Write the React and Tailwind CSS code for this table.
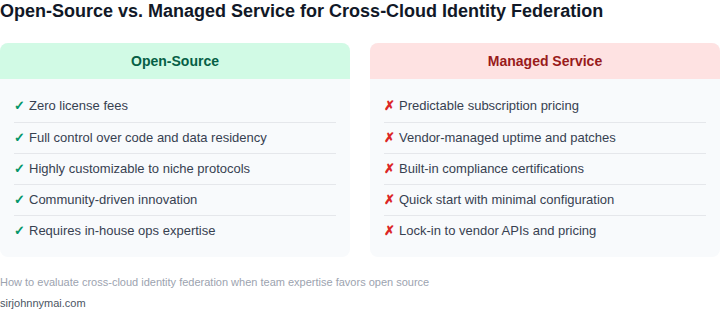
import React from "react";

const left = [
  "Zero license fees",
  "Full control over code and data residency",
  "Highly customizable to niche protocols",
  "Community-driven innovation",
  "Requires in-house ops expertise",
];
const right = [
  "Predictable subscription pricing",
  "Vendor-managed uptime and patches",
  "Built-in compliance certifications",
  "Quick start with minimal configuration",
  "Lock-in to vendor APIs and pricing",
];

function Card({ title, items, good }) {
  return (
    <div className="flex-1 rounded-lg overflow-hidden bg-[#f8fafc]">
      <div
        className={
          "h-[36px] flex items-center justify-center text-[14px] font-bold " +
          (good ? "bg-[#d1fae5] text-[#065f46]" : "bg-[#fee2e2] text-[#991b1b]")
        }
      >
        {title}
      </div>
      <ul className="px-[14px] pt-[12px] pb-[11px]">
        {items.map((t, i) => (
          <li
            key={i}
            className={
              "flex items-center text-[13px] text-[#374151] " +
              (i === 0
                ? "border-b border-[#e5e7eb] h-[32px] pb-[1px]"
                : i < items.length - 1
                ? "border-b border-[#e5e7eb] h-[31px]"
                : "h-[30px]")
            }
          >
            <span
              className={
                good
                  ? "text-[#059669] mr-[4px] font-bold"
                  : "text-[#dc2626] mr-[4px] font-bold"
              }
            >
              {good ? "✓" : "✗"}
            </span>
            {t}
          </li>
        ))}
      </ul>
    </div>
  );
}

export default function App() {
  return (
    <div
      className="w-[720px] h-[310px] bg-white"
      style={{ fontFamily: '"Liberation Sans", Arial, sans-serif' }}
    >
      <h1 className="text-[18px] font-bold text-[#111827] leading-[22px]">
        Open-Source vs. Managed Service for Cross-Cloud Identity Federation
      </h1>
      <div className="flex gap-[20px] mt-[21px]">
        <Card title="Open-Source" items={left} good />
        <Card title="Managed Service" items={right} />
      </div>
      <div className="mt-[18px] text-[11px] text-[#9ca3af] leading-[14px]">
        How to evaluate cross-cloud identity federation when team expertise favors open source
      </div>
      <div className="mt-[7px] text-[11px] text-[#4b5563] leading-[14px]">sirjohnnymai.com</div>
    </div>
  );
}
